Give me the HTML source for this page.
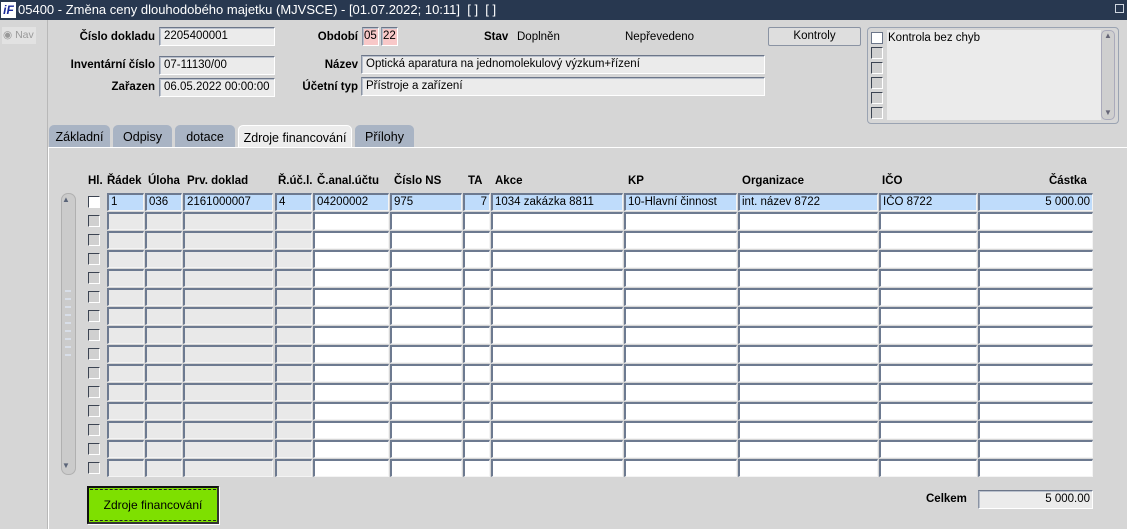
<!DOCTYPE html>
<html><head><meta charset="utf-8">
<style>
*{box-sizing:border-box;margin:0;padding:0}
body{width:1127px;height:529px;overflow:hidden;background:#d6d6d6;font-family:"Liberation Sans",Arial,sans-serif;font-size:11.5px;color:#000;position:relative}
.a{position:absolute}
.title{left:0;top:0;width:1127px;height:20px;background:#283850;color:#fff;font-size:13px;line-height:20px;padding-left:18px;white-space:nowrap}
.logo{left:1px;top:2px;width:15px;height:16px;background:#fff;color:#1a2a9a;font-weight:bold;font-style:italic;font-size:12px;line-height:16px;text-align:center}
.lbl{font-weight:bold;text-align:right;white-space:nowrap}
.fld{background:#ebebeb;border:1px solid #8a93a3;border-top-color:#6c7689;border-right-color:#fff;border-bottom-color:#fff;box-shadow:inset 1px 1px 0 #b9c0cc;padding-left:4px;line-height:17px;white-space:nowrap;overflow:hidden}
.tab{top:125px;height:23px;background:#a9b4c4;border-radius:5px 5px 0 0;line-height:24px;text-align:center;font-size:12.5px}
.c{position:absolute;height:18px;border:1px solid #7d889b;border-top:2px solid #6d7a90;border-left:2px solid #6d7a90;border-right-color:#f4f4f4;border-bottom-color:#f4f4f4;background:#fff;line-height:15px;padding-left:2px;white-space:nowrap;overflow:hidden}
.g{background:#e9e9e9}
.s{background:#bfdcfb}
.cb{position:absolute;width:12px;height:12px;border:1px solid #3c4452;border-right-color:#fff;border-bottom-color:#fff;background:#d0d0d0}
.h{position:absolute;top:175px;font-weight:bold;font-size:11.5px;white-space:nowrap}
</style></head><body>
<div class="a title">05400 - Změna ceny dlouhodobého majetku (MJVSCE) - [01.07.2022; 10:11]&nbsp; [ ]&nbsp; [ ]</div>
<div class="a logo">iF</div>
<div class="a" style="right:3px;top:4px;width:9px;height:9px;border:1px solid #cfd6e0"></div>
<div class="a" style="left:47px;top:20px;width:1px;height:509px;background:#b8b8b8"></div>
<div class="a" style="left:2px;top:27px;width:34px;height:17px;background:#e2e2e2;color:#999;line-height:17px;padding-left:1px;font-size:10.5px;white-space:nowrap">◉ Nav</div>

<div class="a lbl" style="left:60px;top:31px;width:95px">Číslo dokladu</div>
<div class="a fld" style="left:159px;top:27px;width:116px;height:19px">2205400001</div>
<div class="a lbl" style="left:60px;top:59px;width:95px">Inventární číslo</div>
<div class="a fld" style="left:159px;top:56px;width:116px;height:19px">07-11130/00</div>
<div class="a lbl" style="left:60px;top:81px;width:95px">Zařazen</div>
<div class="a fld" style="left:159px;top:78px;width:116px;height:19px">06.05.2022 00:00:00</div>

<div class="a lbl" style="left:280px;top:31px;width:78px">Období</div>
<div class="a fld" style="left:362px;top:27px;width:17px;height:19px;background:#f8c8c8;padding-left:1px">05</div>
<div class="a fld" style="left:381px;top:27px;width:17px;height:19px;background:#f8c8c8;padding-left:1px">22</div>
<div class="a lbl" style="left:280px;top:59px;width:78px">Název</div>
<div class="a fld" style="left:361px;top:55px;width:404px;height:19px">Optická aparatura na jednomolekulový výzkum+řízení</div>
<div class="a lbl" style="left:280px;top:81px;width:78px">Účetní typ</div>
<div class="a fld" style="left:361px;top:77px;width:404px;height:19px">Přístroje a zařízení</div>

<div class="a lbl" style="left:484px;top:31px">Stav</div>
<div class="a" style="left:517px;top:31px">Doplněn</div>
<div class="a" style="left:625px;top:31px">Nepřevedeno</div>
<div class="a" style="left:768px;top:27px;width:93px;height:19px;border:1px solid #8a93a3;background:#dedede;text-align:center;line-height:17px;border-radius:2px">Kontroly</div>

<div class="a" style="left:867px;top:27px;width:252px;height:97px;border:1px solid #9aa3b2;border-radius:4px;background:#d6d6d6"></div>
<div class="a" style="left:887px;top:30px;width:214px;height:90px;background:#ebebeb;padding:2px 1px">Kontrola bez chyb</div>
<div class="cb" style="left:871px;top:32px;background:#fff;border-color:#6c7689"></div>
<div class="cb" style="left:871px;top:47px"></div>
<div class="cb" style="left:871px;top:62px"></div>
<div class="cb" style="left:871px;top:77px"></div>
<div class="cb" style="left:871px;top:92px"></div>
<div class="a cb" style="left:871px;top:107px"></div>
<div class="a" style="left:1101px;top:30px;width:14px;height:90px;background:#cfcfcf;border:1px solid #aab;border-radius:5px"></div>
<div class="a" style="left:1104px;top:31px;font-size:8px;color:#667">▲</div>
<div class="a" style="left:1104px;top:108px;font-size:8px;color:#667">▼</div>

<div class="a tab" style="left:49px;width:61px">Základní</div>
<div class="a tab" style="left:113px;width:59px">Odpisy</div>
<div class="a tab" style="left:175px;width:60px">dotace</div>
<div class="a tab" style="left:238px;width:114px;background:#ececec;border:1px solid #fff;border-bottom:none">Zdroje financování</div>
<div class="a tab" style="left:355px;width:59px">Přílohy</div>
<div class="a" style="left:48px;top:147px;width:1079px;height:1px;background:#fff"></div>
<div class="a" style="left:48px;top:147px;width:1px;height:382px;background:#fff"></div>

<div class="h" style="left:88px">Hl.</div>
<div class="h" style="left:107px">Řádek</div>
<div class="h" style="left:148px">Úloha</div>
<div class="h" style="left:187px">Prv. doklad</div>
<div class="h" style="left:278px">Ř.úč.l.</div>
<div class="h" style="left:317px">Č.anal.účtu</div>
<div class="h" style="left:394px">Číslo NS</div>
<div class="h" style="left:468px">TA</div>
<div class="h" style="left:495px">Akce</div>
<div class="h" style="left:628px">KP</div>
<div class="h" style="left:742px">Organizace</div>
<div class="h" style="left:882px">IČO</div>
<div class="h" style="left:1049px">Částka</div>

<div class="a" style="left:61px;top:193px;width:15px;height:282px;background:#cbcbcb;border:1px solid #b0b0b0;border-radius:7px"></div>
<div class="a" style="left:62px;top:195px;font-size:8px;color:#5a6478">▲</div>
<div class="a" style="left:62px;top:461px;font-size:8px;color:#5a6478">▼</div>
<div class="a" style="left:65px;top:290px;width:6px;height:70px;background:repeating-linear-gradient(#d8dee8 0 2px,transparent 2px 8px)"></div>

<div id="g">
<div class="cb" style="left:88px;top:196px;background:#fff"></div>
<div class="c s" style="left:107px;top:193px;width:37px">1</div>
<div class="c s" style="left:145px;top:193px;width:37px">036</div>
<div class="c s" style="left:183px;top:193px;width:90px">2161000007</div>
<div class="c s" style="left:275px;top:193px;width:37px">4</div>
<div class="c s" style="left:313px;top:193px;width:76px">04200002</div>
<div class="c s" style="left:390px;top:193px;width:72px">975</div>
<div class="c s" style="left:463px;top:193px;width:27px;text-align:right;padding-right:2px">7</div>
<div class="c s" style="left:491px;top:193px;width:132px">1034 zakázka 8811</div>
<div class="c s" style="left:624px;top:193px;width:113px">10-Hlavní činnost</div>
<div class="c s" style="left:738px;top:193px;width:140px">int. název 8722</div>
<div class="c s" style="left:879px;top:193px;width:98px">IČO 8722</div>
<div class="c s" style="left:978px;top:193px;width:115px;text-align:right;padding-right:2px">5 000.00</div>
</div>
<script>
var cols=[[107,37,1],[145,37,1],[183,90,1],[275,37,1],[313,76,0],[390,72,0],[463,27,0],[491,132,0],[624,113,0],[738,140,0],[879,98,0],[978,115,0]];
var h='';
for(var r=1;r<15;r++){var y=193+r*19;h+='<div class="cb" style="left:88px;top:'+(y+3)+'px"></div>';
for(var i=0;i<cols.length;i++){h+='<div class="c'+(cols[i][2]?' g':'')+'" style="left:'+cols[i][0]+'px;top:'+y+'px;width:'+cols[i][1]+'px"></div>';}}
document.getElementById('g').insertAdjacentHTML('beforeend',h);
</script>

<div class="a" style="left:87px;top:486px;width:132px;height:38px;background:#7ee000;border:2px solid #111;border-right-color:#333;border-bottom-color:#333;box-shadow:1px 1px 0 #fff"></div>
<div class="a" style="left:90px;top:489px;width:126px;height:32px;border-top:1px dashed #222;border-bottom:1px dashed #222;text-align:center;line-height:30px;font-size:12px">Zdroje financování</div>

<div class="a lbl" style="left:926px;top:493px">Celkem</div>
<div class="a fld" style="left:978px;top:490px;width:115px;height:19px;text-align:right;padding-right:2px">5 000.00</div>
</body></html>
